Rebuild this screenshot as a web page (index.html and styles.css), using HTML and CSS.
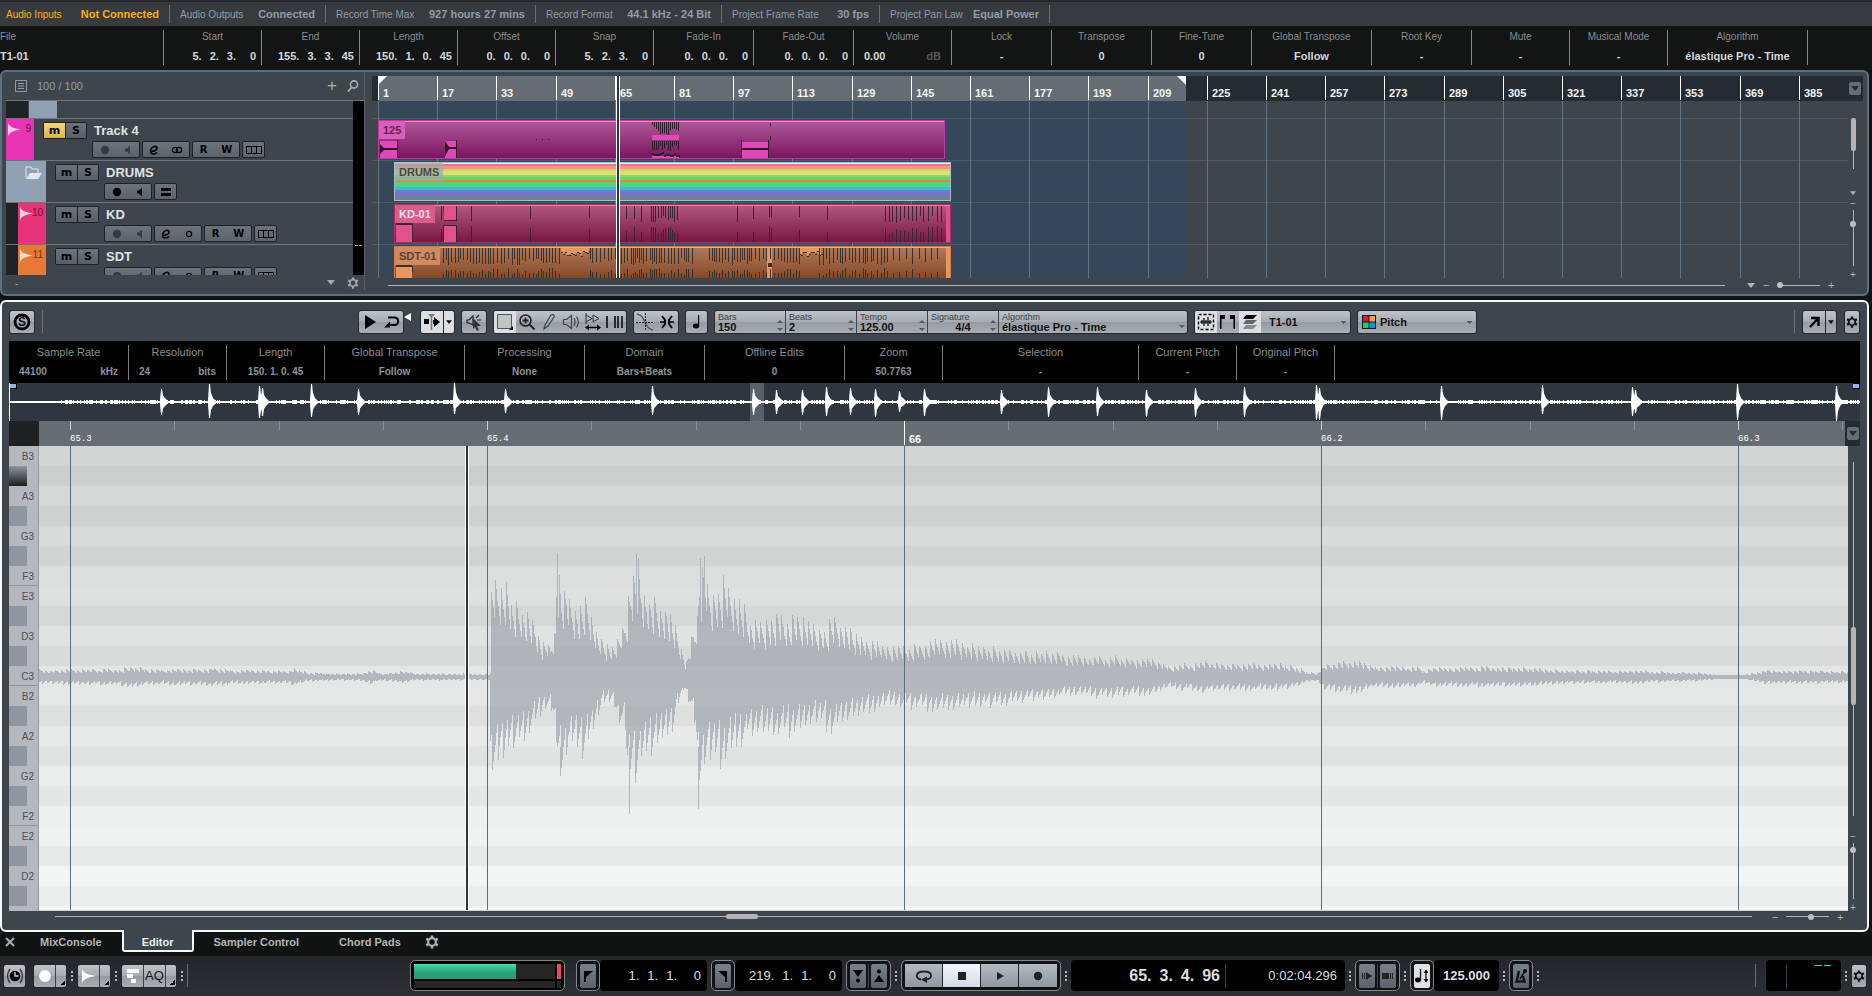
FILE: index.html
```html
<!DOCTYPE html>
<html lang="en">
<head>
    <meta charset="UTF-8">
    <meta name="viewport" content="width=device-width, initial-scale=1.0">
    <title>Project - Sample Editor</title>
    <link rel="stylesheet" href="styles.css">
</head>
<body>

    <!-- Icons -->
    <svg class="defs" aria-hidden="true">
        <symbol id="i-gear" viewBox="0 0 16 16"><path fill="none" stroke="currentColor" stroke-width="2.4" d="M8 3.6a4.4 4.4 0 1 0 .01 0z"/><path stroke="currentColor" stroke-width="3" d="M8 .5v3M8 12.500v3M1.500 4.250l2.600 1.500M11.900 10.250l2.600 1.500M1.500 11.750l2.600-1.500M11.900 5.750l2.600-1.500"/></symbol>
        <symbol id="i-down" viewBox="0 0 8 5"><path fill="currentColor" d="M0 0h8L4 5z"/></symbol>
        <symbol id="i-wave" viewBox="0 0 14 14"><path fill="currentColor" d="M0 0c2 4 6 6 14 7-8 1-12 3-14 7z"/></symbol>
        <symbol id="i-rec" viewBox="0 0 10 10"><circle cx="5" cy="5" r="4.200" fill="currentColor"/></symbol>
        <symbol id="i-mon" viewBox="0 0 10 10"><path fill="currentColor" d="M2 3.500h2L7 .5v9L4 6.500H2z"/></symbol>
        <symbol id="i-edit" viewBox="0 0 10 10"><path fill="none" stroke="currentColor" stroke-width="1.600" d="M2 6.200C5 6.600 8.500 5 8 2.800 7.500.6 3.200 1 1.800 4.500.8 8 3 9.200 5 9c1.600-.2 2.500-.8 3-1.600"/></symbol>
        <symbol id="i-mono" viewBox="0 0 12 10"><circle cx="6" cy="5" r="2.600" fill="none" stroke="currentColor" stroke-width="1.300"/></symbol>
        <symbol id="i-stereo" viewBox="0 0 12 10"><g fill="none" stroke="currentColor" stroke-width="1.300"><circle cx="4" cy="5" r="2.600"/><circle cx="8" cy="5" r="2.600"/></g></symbol>
        <symbol id="i-lanes" viewBox="0 0 16 8"><path fill="none" stroke="currentColor" d="M.5.500h15v7H.500zM5.500.500v7M10.500.500v7"/></symbol>
        <symbol id="i-group" viewBox="0 0 10 8"><path fill="currentColor" d="M0 0h10v3H0zM0 5h10v3H0z"/></symbol>
    </svg>

    <!-- Status Line -->
    <header class="status-line">
        <div class="stat warn" style="width:170px"><span>Audio Inputs</span><b>Not Connected</b></div>
        <div class="stat" style="width:156px"><span>Audio Outputs</span><b>Connected</b></div>
        <div class="stat" style="width:210px"><span>Record Time Max</span><b>927 hours 27 mins</b></div>
        <div class="stat" style="width:186px"><span>Record Format</span><b>44.1 kHz - 24 Bit</b></div>
        <div class="stat" style="width:158px"><span>Project Frame Rate</span><b>30 fps</b></div>
        <div class="stat" style="width:170px"><span>Project Pan Law</span><b>Equal Power</b></div>
    </header>

    <!-- Info Line -->
    <section class="info-line">
        <div class="info file"><span>File</span><b>T1-01</b></div>
        <div class="info"><span>Start</span><b class="time"><i>5.</i><i>2.</i><i>3.</i><i>0</i></b></div>
        <div class="info"><span>End</span><b class="time"><i>155.</i><i>3.</i><i>3.</i><i>45</i></b></div>
        <div class="info"><span>Length</span><b class="time"><i>150.</i><i>1.</i><i>0.</i><i>45</i></b></div>
        <div class="info"><span>Offset</span><b class="time"><i>0.</i><i>0.</i><i>0.</i><i>0</i></b></div>
        <div class="info"><span>Snap</span><b class="time"><i>5.</i><i>2.</i><i>3.</i><i>0</i></b></div>
        <div class="info w100"><span>Fade-In</span><b class="time"><i>0.</i><i>0.</i><i>0.</i><i>0</i></b></div>
        <div class="info w100"><span>Fade-Out</span><b class="time"><i>0.</i><i>0.</i><i>0.</i><i>0</i></b></div>
        <div class="info"><span>Volume</span><b class="split">0.00 <em>dB</em></b></div>
        <div class="info w100"><span>Lock</span><b>-</b></div>
        <div class="info w100"><span>Transpose</span><b>0</b></div>
        <div class="info w100"><span>Fine-Tune</span><b>0</b></div>
        <div class="info w120"><span>Global Transpose</span><b>Follow</b></div>
        <div class="info w100"><span>Root Key</span><b>-</b></div>
        <div class="info"><span>Mute</span><b>-</b></div>
        <div class="info"><span>Musical Mode</span><b>-</b></div>
        <div class="info w140"><span>Algorithm</span><b>élastique Pro - Time</b></div>
    </section>

    <!-- Project Zone -->
    <main class="project panel">
        <div class="track-list">
            <div class="list-head">
                <svg class="ic12" viewBox="0 0 12 12"><path fill="none" stroke="currentColor" d="M.500.500h11v11H.500zM3 3.500h6M3 6h6M3 8.500h6"/></svg>
                <span>100 / 100</span>
                <button class="plain push" aria-label="Add track">+</button>
                <button class="plain" aria-label="Find track"><svg class="ic12" viewBox="0 0 12 12"><circle cx="7" cy="4.500" r="3.600" fill="none" stroke="currentColor" stroke-width="1.600"/><path stroke="currentColor" stroke-width="1.800" d="M4.500 7.500L1 11.500"/></svg></button>
            </div>
            <div class="tracks">
                <div class="rows" id="tracks">
                    <div class="row cut"><div class="indent wide"></div><div class="swatch folder"></div></div>
                </div>
                <div class="meter"><i class="peak"></i></div>
            </div>
            <div class="list-foot"><span>-</span><svg class="ic8 push" viewBox="0 0 8 5"><use href="#i-down"/></svg><svg class="ic12"><use href="#i-gear"/></svg></div>
        </div>
        <div class="timeline">
            <div class="ruler" id="ruler">
                <div class="ruler-range"></div>
                <button class="mini" aria-label="Ruler format"><svg class="ic8"><use href="#i-down"/></svg></button>
            </div>
            <div class="arrange">
                <div class="lanes" id="lanes">
                    <div class="lane cut"></div>
                    <div class="lane"><div class="clip magenta" id="clip-t4"><span>125</span></div></div>
                    <div class="lane"><div class="clip drums"><span>DRUMS</span></div></div>
                    <div class="lane"><div class="clip pink" id="clip-kd"><span>KD-01</span></div></div>
                    <div class="lane"><div class="clip orange" id="clip-sdt"><span>SDT-01</span></div></div>
                </div>
                <div class="vbar">
                    <div class="vscroll"><i></i></div>
                    <svg class="ic8 small"><use href="#i-down"/></svg>
                    <span>−</span>
                    <input type="range" class="vzoom" aria-label="Vertical zoom" value="78">
                    <span>+</span>
                </div>
            </div>
            <div class="hbar">
                <div class="hscroll"></div>
                <svg class="ic8"><use href="#i-down"/></svg>
                <span>−</span><input type="range" class="hzoom" aria-label="Horizontal zoom" value="0"><span>+</span>
            </div>
            <div class="playhead arrange-head"></div>
        </div>
    </main>

    <!-- Editor Zone -->
    <section class="editor panel">
        <div class="toolbar">
            <button class="btn w26" aria-label="Solo editor"><svg class="ic18" viewBox="0 0 18 18"><circle cx="9" cy="9" r="7" fill="none" stroke="#000" stroke-width="2.800"/><text x="9" y="13" text-anchor="middle" class="solo">S</text></svg></button>
            <i class="sep"></i>
            <div class="tools-mid">
                <div class="group">
                    <button class="btn w22" aria-label="Audition"><svg class="ic14" viewBox="0 0 14 14"><path d="M2 0l11 7L2 14z"/></svg></button>
                    <button class="btn w22" aria-label="Audition loop"><svg class="ic16" viewBox="0 0 16 16"><path fill="none" stroke="#000" stroke-width="2" d="M4 3.500h7a3.800 3.800 0 0 1 0 7.500H4"/><path d="M0 13.500l6-6v6z"/></svg></button>
                </div>
                <svg class="ic8 notch" viewBox="0 0 8 8"><path fill="#fff" d="M7 0v8L0 4z"/></svg>
                <div class="group on">
                    <button class="btn w22" aria-label="Auto scroll"><svg class="ic18" viewBox="0 0 18 18"><path d="M1 6h5v5H1zM11 7V4l6 5-6 5v-3h-1V7z"/><path stroke="#777" stroke-width="1.500" d="M8.500 2v15"/><path fill="#777" d="M5 1h7L8.500 5z"/></svg></button>
                    <button class="btn w11" aria-label="Auto scroll options"><svg class="ic8 small"><use href="#i-down"/></svg></button>
                </div>
                <button class="btn w26" aria-label="Acoustic feedback"><svg class="ic18" viewBox="0 0 18 18"><path fill="none" stroke="#222" stroke-width="1.200" d="M2 7h2l4-4v9L4 10H2zM11 5l3-3M12 7h4"/><path d="M8 5l8 8h-4l2 4-2 1-2-4-2 2z" fill="#333"/></svg></button>
                <div class="group">
                    <button class="btn w22 lit" aria-label="Range selection"><svg class="ic18" viewBox="0 0 18 18"><path fill="#bfc5c3" stroke="#555" d="M1.500 1.500h14v14h-14z"/><path d="M17 13v4h-4z"/></svg></button>
                    <button class="btn w22" aria-label="Zoom"><svg class="ic18" viewBox="0 0 18 18"><circle cx="7.500" cy="7.500" r="5.500" fill="none" stroke="#222" stroke-width="1.600"/><path stroke="#222" stroke-width="1.800" d="M4.500 7.500h6M7.500 4.500v6M11.500 11.500l5 5"/></svg></button>
                    <button class="btn w22" aria-label="Draw"><svg class="ic18" viewBox="0 0 18 18"><path fill="none" stroke="#444" stroke-width="1.200" d="M4 16l1-4 6-10c1-1 4 0 3 2L8 13z"/></svg></button>
                    <button class="btn w22" aria-label="Play"><svg class="ic18" viewBox="0 0 18 18"><path fill="none" stroke="#444" stroke-width="1.200" d="M1.500 6.500h3l5-4v13l-5-4h-3zM12 5q2 4 0 8M14.500 3.500q3.500 5.500 0 11"/></svg></button>
                    <button class="btn w22" aria-label="Scrub"><svg class="ic18" viewBox="0 0 18 18"><path fill="none" stroke="#333" d="M2 0v11M2 2l6 3.500L2 9M9 2v7M9 2l6 3.500L9 9"/><path stroke="#000" stroke-width="1.600" d="M3 14.500h12"/><path d="M1 14.500l4-3v6zM17 14.500l-4-3v6z"/></svg></button>
                    <button class="btn w22" aria-label="Warp"><svg class="ic18" viewBox="0 0 18 18"><path stroke="#000" stroke-width="1.500" d="M1 3v12M9 3v12M12 3v12M16 3v12"/></svg></button>
                </div>
                <div class="group">
                    <button class="btn w22" aria-label="Snap to zero crossing"><svg class="ic18" viewBox="0 0 18 18"><path fill="none" stroke="#555" stroke-width="1.300" d="M1 1c5 1 6 4 8 8s3 7 8 8"/><path stroke="#111" stroke-dasharray="2 1" d="M9.500 0v18M0 9.500h18"/></svg></button>
                    <button class="btn w22" aria-label="Snap"><svg class="ic18" viewBox="0 0 18 18"><path fill="none" stroke="#000" stroke-width="2" d="M4 3l3 4v4l-3 4M14 3l-3 4v4l3 4"/><path stroke="#000" stroke-width="1.500" d="M2 9h4M12 9h4"/></svg></button>
                </div>
                <button class="btn w24" aria-label="Musical mode"><svg class="ic16" viewBox="0 0 16 16"><ellipse cx="7" cy="12" rx="3.200" ry="2.500"/><path stroke="#000" stroke-width="1.200" d="M9.600 1v11"/></svg></button>
                <div class="group fields">
                    <label class="field"><span>Bars</span><input value="150"></label>
                    <label class="field"><span>Beats</span><input value="2"></label>
                    <label class="field"><span>Tempo</span><input value="125.00"></label>
                    <label class="field sig"><span>Signature</span><input value="4/4"></label>
                    <label class="field algo"><span>Algorithm</span><select><option>élastique Pro - Time</option></select></label>
                </div>
                <div class="group">
                    <button class="btn w22 lit" aria-label="Show audio event"><svg class="ic18" viewBox="0 0 18 18"><path fill="none" stroke="#000" stroke-width="1.400" stroke-dasharray="3 2" d="M1.500 1.500h15v15h-15z"/><path stroke="#000" stroke-width="1.200" d="M3 9h12M5 7v4M7 5v8M9 7v4M11 4v9M13 7v4"/></svg></button>
                    <button class="btn w22" aria-label="Show regions"><svg class="ic18" viewBox="0 0 18 18"><path d="M1 2h5v4H2.500v10H1zM11 2h5v14h-1.500V6H11z"/></svg></button>
                    <button class="btn w22 lit" aria-label="Layers"><svg class="ic16" viewBox="0 0 16 16"><path d="M4 1h11l-4 4H1z"/><path fill="#666" d="M4 6h11l-4 4H1z"/><path fill="#888" d="M4 11h11l-4 4H1z"/></svg></button>
                    <select class="pick w89" aria-label="Event"><option>T1-01</option></select>
                </div>
                <div class="group pitch">
                    <svg class="ic14" viewBox="0 0 14 14"><path fill="#0b1a2b" d="M0 0h14v14H0z"/><path fill="#e8112d" d="M1 1h5.500v5.500H1z"/><path fill="#f0a52f" d="M7.500 1H13v5.500H7.500z"/><path fill="#12d36b" d="M1 7.500h5.500V13H1z"/><path fill="#0b93e0" d="M7.500 7.500H13V13H7.500z"/></svg>
                    <select class="pick" aria-label="Color mode"><option>Pitch</option></select>
                </div>
            </div>
            <i class="sep"></i>
            <div class="group">
                <button class="btn w22" aria-label="Open window"><svg class="ic14" viewBox="0 0 14 14"><path fill="none" stroke="#000" stroke-width="2.400" d="M4 3h7.500v8M11 3.500L3 12"/></svg></button>
                <button class="btn w11" aria-label="Window options"><svg class="ic8 small"><use href="#i-down"/></svg></button>
            </div>
            <button class="btn w16" aria-label="Set up toolbar"><svg class="ic12"><use href="#i-gear"/></svg></button>
        </div>

        <div class="sample-info">
            <div class="info w120"><span>Sample Rate</span><b class="split">44100 <em>kHz</em></b></div>
            <div class="info"><span>Resolution</span><b class="split">24 <em>bits</em></b></div>
            <div class="info"><span>Length</span><b>150. 1. 0. 45</b></div>
            <div class="info w140"><span>Global Transpose</span><b>Follow</b></div>
            <div class="info w120"><span>Processing</span><b>None</b></div>
            <div class="info w120"><span>Domain</span><b>Bars+Beats</b></div>
            <div class="info w140"><span>Offline Edits</span><b>0</b></div>
            <div class="info"><span>Zoom</span><b>50.7763</b></div>
            <div class="info w196"><span>Selection</span><b>-</b></div>
            <div class="info"><span>Current Pitch</span><b>-</b></div>
            <div class="info"><span>Original Pitch</span><b>-</b></div>
        </div>

        <div class="overview" id="overview"><div class="view-range"></div></div>

        <div class="sample-ruler">
            <div class="corner"></div>
            <div class="beats" id="beats"></div>
            <div class="ruler-menu"><button class="mini" aria-label="Ruler format"><svg class="ic8"><use href="#i-down"/></svg></button></div>
        </div>

        <div class="sample-area">
            <div class="keys" id="keys"></div>
            <div class="wave" id="wave"><div class="playhead"></div></div>
            <div class="vbar tall">
                <div class="vscroll"><i></i></div>
                <span>−</span>
                <input type="range" class="vzoom" aria-label="Waveform zoom" value="92">
                <span>+</span>
            </div>
        </div>
        <div class="hbar wide">
            <div class="hscroll"><i></i></div>
            <span>−</span><input type="range" class="hzoom" aria-label="Sample zoom" value="60"><span>+</span>
        </div>
    </section>

    <!-- Lower Zone Tabs -->
    <nav class="tabs">
        <button class="plain close" aria-label="Close lower zone"><svg class="ic12" viewBox="0 0 12 12"><path stroke="currentColor" stroke-width="2" d="M2 2l8 8M10 2l-8 8"/></svg></button>
        <button class="tab">MixConsole</button>
        <button class="tab active">Editor</button>
        <button class="tab">Sampler Control</button>
        <button class="tab">Chord Pads</button>
        <button class="plain" aria-label="Set up tabs"><svg class="ic14"><use href="#i-gear"/></svg></button>
    </nav>

    <!-- Transport -->
    <footer class="transport">
        <button class="btn w24" aria-label="Constrain delay"><svg class="ic18" viewBox="0 0 18 18"><circle cx="9" cy="9" r="5.300"/><path fill="none" stroke="#ddd" stroke-width="1.300" d="M9 5v4h3.500"/><path fill="none" stroke="#333" stroke-width="1.300" d="M4 2Q-1 9 4 16M14 2q5 7 0 14"/></svg></button>
        <div class="group gap-l"><button class="btn w22" aria-label="Record mode"><svg class="ic14 white"><use href="#i-rec"/></svg></button><button class="btn w10 corner-btn" aria-label="Record options"></button></div>
        <i class="dots"></i>
        <div class="group"><button class="btn w22" aria-label="Audio record mode"><svg class="ic14 white"><use href="#i-wave"/></svg></button><button class="btn w10 corner-btn" aria-label="Audio options"></button></div>
        <i class="dots"></i>
        <div class="group"><button class="btn w22" aria-label="MIDI record mode"><svg class="ic14 white" viewBox="0 0 14 14"><path fill="#fff" d="M1 0h12v4H1zM1 5h6v4H1zM5 10h5v4H5z"/></svg></button><button class="btn w22 aq">AQ</button><button class="btn w10 corner-btn" aria-label="Quantize options"></button></div>
        <i class="dots"></i>
        <i class="sep"></i>

        <div class="load"><div class="load-bar"><i></i></div><div class="load-clip"></div><div class="load-disk"></div><div class="load-disk"></div></div>

        <div class="ring"><button class="key" aria-label="Left locator"><svg class="ic14" viewBox="0 0 14 14"><path d="M3 13V2h9L5 8v5z"/></svg></button></div>
        <div class="display time loc"><i>1.</i><i>1.</i><i>1.</i><i>0</i></div>
        <div class="ring second"><button class="key" aria-label="Right locator"><svg class="ic14" viewBox="0 0 14 14"><path d="M11 13V2H2l7 6v5z"/></svg></button></div>
        <div class="display time loc"><i>219.</i><i>1.</i><i>1.</i><i>0</i></div>
        <div class="ring second">
            <button class="key" aria-label="Punch in"><svg class="ic14" viewBox="0 0 14 14"><path d="M2 1h10L7 8z"/><circle cx="7" cy="11.500" r="2"/></svg></button>
            <i class="bar"></i>
            <button class="key" aria-label="Punch out"><svg class="ic14" viewBox="0 0 14 14"><path d="M2 13h10L7 6z"/><circle cx="7" cy="2.500" r="2"/></svg></button>
        </div>
        <i class="dots"></i>
        <div class="ring play">
            <button aria-label="Cycle"><svg class="ic16" viewBox="0 0 16 16"><path fill="none" stroke="#222" stroke-width="1.800" d="M5 11.500C-1 10.500-1 3.500 8 3.500s9 7 2 8"/><path fill="#222" d="M5 11.500l6-3v6.500z"/></svg></button>
            <button class="lit" aria-label="Stop"><svg class="ic14" viewBox="0 0 14 14"><path fill="#222" d="M3 3h8v8H3z"/></svg></button>
            <button aria-label="Start"><svg class="ic14" viewBox="0 0 14 14"><path fill="#222" d="M4 3l7 4-7 4z"/></svg></button>
            <button aria-label="Record"><svg class="ic10"><use href="#i-rec"/></svg></button>
        </div>
        <i class="dots"></i>
        <div class="display position"><b class="time"><i>65.</i><i>3.</i><i>4.</i><i>96</i></b><i class="bar"></i><span>0:02:04.296</span></div>
        <i class="dots"></i>
        <div class="ring">
            <button class="key" aria-label="Pre-roll"><svg class="ic12" viewBox="0 0 12 12"><path stroke="#222" d="M1.500 3v6M3.500 3v6"/><path fill="#222" d="M5 2l6 4-6 4z"/></svg></button>
            <i class="bar"></i>
            <button class="key" aria-label="Post-roll"><svg class="ic12" viewBox="0 0 12 12"><path fill="#222" d="M0 3h7v6H0z"/><path stroke="#222" d="M8.500 3v6M10.500 3v6"/></svg></button>
        </div>
        <i class="dots"></i>
        <div class="ring"><button class="key lit" aria-label="Tempo track"><svg class="ic16" viewBox="0 0 16 16"><ellipse cx="4" cy="12" rx="3" ry="2.400"/><path stroke="#111" stroke-width="1.300" d="M6.500 1v11M12 3v10"/><path d="M9.500 5L12 1.500 14.500 5zM9.500 11l2.500 3.500 2.500-3.500z"/></svg></button></div>
        <div class="display tempo"><b>125.000</b></div>
        <i class="dots"></i>
        <div class="ring"><button class="key" aria-label="Metronome"><svg class="ic16" viewBox="0 0 16 16"><path fill="none" stroke="#111" stroke-width="2.400" d="M6 3L3.500 13.500h8L10 8"/><path stroke="#111" stroke-width="1.500" d="M7 11l5-8"/><circle cx="12" cy="3" r="2"/></svg></button></div>
        <i class="dots"></i>
        <i class="sep push"></i>
        <div class="display levels"><i class="bar"></i><i class="level"></i><i class="level"></i></div>
        <i class="dots"></i>
        <button class="btn w16" aria-label="Set up transport"><svg class="ic12"><use href="#i-gear"/></svg></button>
    </footer>

    <script src="script.js"></script>
</body>
</html>
```

FILE: styles.css
```css
* {
    box-sizing: border-box;
}

body {
    margin: 0;
    min-height: 100vh;
    display: flex;
    flex-direction: column;
    background: #111313;
    font-family: "Liberation Sans", Arial, sans-serif;
    font-size: 11px;
    color: #c3c8cc;
    overflow: hidden;
}

button, input, select {
    font: inherit;
    color: inherit;
    margin: 0;
    padding: 0;
    border: 0;
    background: none;
}

i, em {
    font-style: normal;
}

svg {
    display: block;
    flex: none;
}

.defs { position: absolute; width: 0; height: 0; }
.ic8 { width: 8px; height: 5px; }
.ic8.small { width: 6px; height: 4px; }
.ic10 { width: 10px; height: 10px; }
.ic12 { width: 12px; height: 12px; }
.ic14 { width: 14px; height: 14px; }
.ic16 { width: 16px; height: 16px; }
.ic18 { width: 18px; height: 18px; }
.push { margin-left: auto; }
.w10 { width: 10px; }
.w11 { width: 11px; }
.w16 { width: 16px; }
.w22 { width: 22px; }
.w24 { width: 23px; }
.w26 { width: 26px; }

/* Status Line */
.status-line {
    display: flex;
    align-items: center;
    height: 26px;
    border-top: 2px solid #24282b;
    background: #383b3e;
    color: #8d9cab;
}

.stat {
    display: flex;
    justify-content: space-between;
    align-items: center;
    height: 18px;
    padding: 0 10px;
    border-right: 1px solid #63717e;
    white-space: nowrap;
}

.stat span {
    font-size: 10px;
}

.warn {
    padding-left: 6px;
    color: #ffab0f;
}

/* Info Line */
.info-line {
    display: flex;
    height: 44px;
    padding: 4px 0 5px;
    background: #131414;
}

.info {
    width: 98px;
    flex: none;
    display: flex;
    flex-direction: column;
    align-items: center;
    border-right: 1px solid #84888b;
    white-space: nowrap;
}

.info.file { width: 164px; align-items: flex-start; }
.info.w100 { width: 100px; }
.info.w120 { width: 120px; }
.info.w140 { width: 140px; }
.info.w196 { width: 196px; }

.info span {
    height: 20px;
    line-height: 13px;
    font-size: 10px;
    color: #8b8e90;
}

.info b {
    line-height: 13px;
    color: #d3d7da;
}

.time {
    display: flex;
    gap: 8px;
}

.time i:last-child {
    min-width: 12px;
    text-align: right;
}

.info .time {
    align-self: flex-end;
    padding-right: 5px;
}

.info .split {
    align-self: stretch;
    display: flex;
    justify-content: space-between;
    padding: 0 10px;
}

.info-line em {
    color: #56595b;
}

/* Panels */
.panel {
    margin-right: 3px;
    border: 2px solid #5f6f7d;
    border-radius: 6px;
    background: #3e454c;
}

.project {
    display: flex;
    height: 226px;
    margin-bottom: 4px;
}

/* Track List */
.track-list {
    width: 363px;
    flex: none;
    display: flex;
    flex-direction: column;
    padding-left: 4px;
    margin-bottom: 4px;
    border-right: 1px solid #596067;
}

.list-head {
    display: flex;
    align-items: center;
    gap: 10px;
    height: 29px;
    padding: 0 5px 0 9px;
    border-bottom: 1px solid #6d747b;
    color: #949ba0;
}

.plain {
    display: flex;
    align-items: center;
    color: #a9aeb2;
}

.list-head .plain { font-size: 17px; }

.tracks {
    display: flex;
    height: 174px;
    overflow: hidden;
}

.rows {
    flex: 1;
}

.meter {
    width: 11px;
    height: 174px;
    padding-top: 144px;
    background: #000;
}

.peak {
    display: block;
    height: 1px;
    margin: 0 2px;
    background: linear-gradient(#000, #000) center / 1px 1px no-repeat #e5a22a;
}

.row {
    display: flex;
    height: 42px;
    border-bottom: 1px solid #6d747b;
}

.row.cut { height: 18px; }

.indent { width: 12px; background: #1f2325; }
.indent.wide { width: 22px; margin-right: 1px; }

.swatch {
    width: 28px;
    flex: none;
    display: flex;
    justify-content: space-between;
    padding: 4px 3px 0 2px;
    font-size: 10px;
    color: #4a3540;
}

.swatch.folder { background: #90a1b4; }
.swatch.drumfolder { width: 40px; padding: 4px 1px 0 18px; background: #90a1b4; }
.swatch.magenta { background: #e733b4; color: #4c1d42; }
.swatch.pink { background: #e6337a; color: #6b1838; }
.swatch.orange { background: #e67934; color: #6d3617; }
.swatch svg { opacity: .75; color: #fff; margin-right: -2px; }

.track {
    padding: 3px 0 0 9px;
}

.track-top, .track-keys {
    display: flex;
    align-items: center;
}

.ms {
    display: flex;
    height: 17px;
    border: 1px solid #1d2124;
    border-radius: 2px;
}

.ms button {
    width: 21px;
    background: linear-gradient(#6c737b, #585f67);
    color: #000;
    font: bold 11px "DejaVu Sans", sans-serif;
    line-height: 15px;
}

.ms button + button { border-left: 1px solid #1d2124; }
.ms .on { background: linear-gradient(#f4d978, #d7b54c); }

.track-top strong {
    margin-left: 7px;
    font-size: 13px;
    color: #dfe2e4;
}

.track-keys {
    gap: 2px;
    margin: 2px 0 0 49px;
}

.pair {
    display: flex;
    justify-content: space-around;
    align-items: center;
    width: 48px;
    height: 17px;
    border: 1px solid #1d2124;
    border-radius: 2px;
    background: linear-gradient(#6c737b, #5c636b);
    color: #000;
}

.pair.one { width: 23px; }
.pair.dim { color: #343a40; }

.pair button {
    display: flex;
    font: bold 10px "DejaVu Sans", sans-serif;
    line-height: 15px;
}

.list-foot {
    display: flex;
    align-items: center;
    gap: 12px;
    padding: 0 5px 0 9px;
    height: 15px;
    color: #a2a7ab;
}

/* Arrangement */
.timeline {
    flex: 1;
    min-width: 0;
    display: flex;
    flex-direction: column;
    padding: 4px 4px 0 7px;
    position: relative;
}

.ruler {
    position: relative;
    height: 25px;
    overflow: hidden;
    background: #252b33;
}

.ruler-range {
    width: 808px;
    height: 25px;
    margin-left: 6px;
    background: #666c74;
}

.ruler-range::before, .ruler-range::after {
    content: "";
    float: left;
    border-top: 9px solid #fff;
    border-right: 9px solid transparent;
}

.ruler-range::after {
    float: right;
    border-right: 0;
    border-left: 9px solid transparent;
}

.tick {
    position: absolute;
    top: 0;
    height: 24px;
    padding: 10px 0 0 4px;
    border-left: 1px solid #fff;
    font-weight: bold;
    line-height: 15px;
    color: #f2f4f5;
}

.mini {
    display: flex;
    justify-content: center;
    align-items: center;
    width: 12px;
    height: 13px;
    border-radius: 2px;
    background: #666c74;
    color: #252b33;
}

.ruler .mini {
    position: absolute;
    right: 2px;
    top: 6px;
}

.arrange {
    display: flex;
    height: 177px;
}

.lanes {
    position: relative;
    flex: 1;
    overflow: hidden;
    background: linear-gradient(#37475a, #37475a) 6px 0 / 808px 100% no-repeat;
}

.grid-line {
    position: absolute;
    top: 0;
    bottom: 0;
    width: 1px;
    background: #667583;
}

.lane {
    height: 42px;
    padding-top: 1px;
    border-bottom: 1px solid #4c5a69;
}

.lane.cut { height: 18px; }

.clip {
    position: relative;
    width: 557px;
    height: 39px;
    margin-left: 22px;
    border: 1px solid;
    overflow: hidden;
}

.clip svg {
    position: absolute;
    left: 0;
    top: 0;
}

.clip span {
    position: relative;
    z-index: 1;
    display: inline-block;
    height: 18px;
    padding: 0 4px;
    font-weight: bold;
    line-height: 18px;
    color: #4f4548;
}

.clip.magenta {
    width: 567px;
    margin-left: 6px;
    border-color: #c733a4;
    background: linear-gradient(#b0599a, #7b1560);
    box-shadow: inset 0 1px #ef8ad6;
}

.clip.magenta span { background: #d860b8; color: #6b2159; }

.clip.drums {
    border-color: #a9bccb;
    background: linear-gradient(#e5edf3 1px, #f16d9f 1px 3px, #ea9b70 3px 6px, #e5c96d 6px 8px, #dbe172 8px 12px, #8fd961 12px 14px, #6cd161 14px 17px, #dd8452 17px 19px, #51d677 19px 23px, #4ccda0 23px 24px, #43bcc4 24px 27px, #6e7adb 27px 29px, #776fda 29px 32px, #708292 32px);
}

.clip.drums span { background: rgba(160, 170, 165, .75); color: #444b46; }

.clip.pink {
    border-color: #b42a62;
    background: linear-gradient(#b05a7c, #7a1740);
    box-shadow: inset 0 1px #f083ab;
}

.clip.pink span { background: #d95d8a; color: #f7dfe8; }

.clip.orange {
    border-color: #d97b45;
    background: linear-gradient(#b07a5a, #7d401e);
    box-shadow: inset 0 1px #f2a87c;
}

.clip.orange span { background: #d08a60; color: #5c4334; }

.playhead {
    position: absolute;
    top: 0;
    bottom: 0;
    left: 426px;
    width: 4px;
    border: solid #fff;
    border-width: 0 1px;
    background: #30353a;
}

.arrange-head {
    top: 4px;
    bottom: 16px;
    left: 251px;
}

/* Scroll and Zoom */
.vbar {
    width: 15px;
    flex: none;
    display: flex;
    flex-direction: column;
    align-items: center;
    padding: 17px 5px 0 0;
    color: #b7b3b5;
    font-size: 10px;
    line-height: 10px;
}

.vscroll {
    width: 5px;
    height: 51px;
    flex: none;
    margin-bottom: 22px;
    background: linear-gradient(#b7b3b5, #b7b3b5) 2px 0 / 1px 100% no-repeat;
}

.vscroll i {
    display: block;
    height: 33px;
    border-radius: 2px;
    background: #b7b3b5;
}

.vbar span { height: 10px; margin: 4px 0 1px; }

input[type="range"] {
    appearance: none;
    -webkit-appearance: none;
    width: 43px;
    height: 7px;
    background: linear-gradient(#b7b3b5, #b7b3b5) 0 3px / 100% 1px no-repeat;
}

input[type="range"]::-webkit-slider-thumb {
    -webkit-appearance: none;
    width: 6px;
    height: 6px;
    border-radius: 50%;
    background: #c0bec0;
}

input.vzoom {
    writing-mode: vertical-lr;
    direction: rtl;
    width: 7px;
    height: 56px;
    flex: none;
    background: linear-gradient(#b7b3b5, #b7b3b5) 3px 0 / 1px 100% no-repeat;
}

.hbar {
    display: flex;
    align-items: center;
    gap: 8px;
    height: 14px;
    padding: 0 29px 0 16px;
    color: #b7b3b5;
}

.hbar svg { margin-left: 14px; }
.hbar span { width: 6px; line-height: 10px; }

.hscroll {
    flex: 1;
    height: 1px;
    background: #b7b3b5;
}

/* Editor */
.editor {
    flex: 1;
    display: flex;
    flex-direction: column;
    padding: 0 7px;
    border-color: #f4f8fb;
}

.toolbar {
    display: flex;
    align-items: center;
    gap: 7px;
    height: 39px;
}

.tools-mid {
    flex: 1;
    display: flex;
    align-items: center;
    gap: 6px;
    padding-left: 308px;
}

.sep {
    width: 1px;
    height: 23px;
    background: #687078;
}

.group, .toolbar > .btn, .tools-mid > .btn, .transport > .btn {
    height: 24px;
    display: flex;
    align-items: center;
    border: 1px solid #24292e;
    border-radius: 3px;
    background: linear-gradient(#bfc3c9, #a6abb2 50%, #979ca4 52%, #a9aeb5);
    color: #111;
    overflow: hidden;
    flex: none;
}

.btn {
    display: flex;
    justify-content: center;
    align-items: center;
    height: 22px;
    color: #111;
}

.group.on, .btn.lit { background: #dcdee1; }
.group .btn + .w11 { border-left: 1px solid #24292e; }
.solo { font: bold 12px "Liberation Sans", sans-serif; }

.notch {
    height: 8px;
    margin: -9px 2px 0 -6px;
}

.field {
    position: relative;
    width: 71px;
    height: 22px;
    padding: 1px 3px;
    border-right: 1px solid #3c4248;
    display: block;
}

.field span {
    display: block;
    height: 10px;
    font-size: 9px;
    line-height: 10px;
    color: #3d4247;
}

.field input, .field select {
    display: block;
    width: 100%;
    height: 11px;
    font-weight: bold;
    line-height: 11px;
    appearance: none;
}

.field::before, .field::after {
    content: "";
    position: absolute;
    right: 2px;
    top: 9px;
    border: 3px solid transparent;
    border-top: 0;
    border-bottom-color: #555b61;
}

.field::after {
    top: 17px;
    border-top: 3px solid #555b61;
    border-bottom: 0;
}

.field.sig input { text-align: center; }
.field.algo { width: 188px; border: 0; }
.field.algo::before { display: none; }
.field.algo::after { top: 14px; }

.pick {
    width: 100px;
    height: 22px;
    padding-left: 8px;
    appearance: none;
    font-weight: bold;
    background: linear-gradient(#555b61, #555b61) calc(100% - 4px) 10px / 5px 1px no-repeat, linear-gradient(#555b61, #555b61) calc(100% - 5px) 11px / 3px 1px no-repeat, linear-gradient(#555b61, #555b61) calc(100% - 6px) 12px / 1px 1px no-repeat;
}

.pick.w89 { width: 89px; }
.group.pitch { width: 120px; padding-left: 4px; }
.pitch .pick { padding-left: 4px; }

/* Sample Info */
.sample-info {
    display: flex;
    height: 42px;
    padding: 4px 0 3px;
    background: #000;
}

.sample-info .info { border-color: #7b7f82; }

.sample-info .info span {
    font-size: 11px;
    line-height: 14px;
}

.sample-info .info b {
    font-size: 10px;
    color: #8e9397;
}

.sample-info em { color: inherit; }

.overview {
    position: relative;
    height: 38px;
    background: #2f3640;
    border-left: 1px solid #fff;
    overflow: hidden;
}

.overview::before, .overview::after {
    content: "";
    position: absolute;
    z-index: 1;
    left: 0;
    top: 0;
    width: 6px;
    height: 4px;
    border: solid #000;
    border-width: 1px 1px 1px 0;
    background: #8fb4f0;
}

.overview::after { left: auto; right: 0; }

.view-range {
    position: absolute;
    left: 740px;
    top: 0;
    width: 14px;
    height: 38px;
    background: #596068;
}

.overview svg { position: absolute; }

.sample-ruler {
    display: flex;
    height: 25px;
}

.corner { width: 30px; background: #1f2122; }

.beats {
    position: relative;
    flex: 1;
    overflow: hidden;
    background: #666c74;
}

.beat {
    position: absolute;
    top: 0;
    height: 9px;
    border-left: 1px solid #8b9097;
    font: 9px/12px "Liberation Mono", monospace;
    color: #fff;
}

/* the tick is the left border, so the label hangs below it */
.beat span {
    position: absolute;
    left: -1px;
    top: 12px;
}

.beat.major { height: 24px; border-color: #fff; }
.beat.major span { left: 4px; font: bold 11px/12px "Liberation Sans", sans-serif; }
.beat.minor { border-color: #cfd2d5; }

.ruler-menu {
    display: flex;
    align-items: center;
    justify-content: center;
    width: 15px;
    background: #252b33;
}

.sample-area {
    display: flex;
    height: 465px;
}

.keys {
    width: 30px;
    overflow: hidden;
    border-right: 1px solid #949ca6;
    background: #b5b8bf;
}

.key-row {
    height: 20px;
    padding-right: 4px;
    text-align: right;
    font-size: 10px;
    line-height: 22px;
    color: #4b5157;
}

.key-row.black::before {
    content: "";
    display: block;
    width: 18px;
    height: 20px;
    background: #8f96a0;
}

.key-row.low::before { background: linear-gradient(#8f96a0, #1c1e20); }
.key-row.edge { border-bottom: 1px solid #8f96a0; }

.wave {
    position: relative;
    flex: 1;
    overflow: hidden;
    border-bottom: 1px solid #cfd2d3;
}

.wave-row { height: 20px; }

.wave svg {
    position: absolute;
    left: 0;
    top: 0;
}

.wave .grid-line { background: #5d6d7a; }

.tall { width: 12px; padding: 16px 2px 0 0; }
.tall .vscroll { height: 354px; margin-bottom: 12px; padding-top: 165px; }
.tall .vscroll i { height: 78px; }

.hbar.wide {
    gap: 8px;
    padding: 0 17px 0 46px;
    height: 11px;
}

.wide .hscroll { margin-right: 12px; }

.wide .hscroll i {
    display: block;
    width: 32px;
    height: 5px;
    margin: -2px 0 0 671px;
    border-radius: 2px;
    background: #b7b3b5;
}

/* Tabs */
.tabs {
    display: flex;
    height: 24px;
    align-items: flex-start;
    font-weight: bold;
}

.tabs .plain { height: 20px; padding: 0 4px; }

.tab {
    height: 20px;
    padding: 0 20px;
    line-height: 20px;
    color: #b1b5b8;
}

.tab.active {
    position: relative;
    height: 22px;
    margin-top: -2px;
    padding: 2px 18px 0;
    border: solid #f4f8fb;
    border-width: 0 2px 2px;
    border-radius: 0 0 3px 3px;
    background: #3e454c;
    color: #e8f1f8;
}

/* Transport */
.transport {
    display: flex;
    align-items: center;
    height: 40px;
    padding: 0 5px 1px 3px;
    background: linear-gradient(#24262a, #2d3035);
}

.transport .group .btn { border-right: 1px solid #3c4146; }
.transport .group .btn:last-child { border: 0; }
.transport .gap-l { margin-left: 7px; }
.white { color: #fff; }
.transport .aq { font-size: 13px; }

.corner-btn {
    background: linear-gradient(135deg, transparent 50%, #000 50%) 4px 15px / 5px 5px no-repeat;
}

.dots {
    width: 2px;
    height: 10px;
    margin: 0 4px;
    flex: none;
    background: repeating-linear-gradient(#b4b7ba 0 2px, transparent 2px 4px);
}

.load {
    display: grid;
    grid-template: 15px 7px / 141px 4px;
    gap: 2px;
    width: 155px;
    height: 31px;
    margin: 0 11px 0 222px;
    padding: 3px;
    border: 1px solid #83878b;
    border-radius: 5px;
    background: #000;
    flex: none;
}

.load-bar, .load-disk { background: #262626; }

.load-bar i {
    display: block;
    width: 102px;
    height: 15px;
    background: linear-gradient(#42ddaa, #26a279 60%, #2c9b72);
}

.load-clip { background: #f4455b; }

.ring {
    display: flex;
    align-items: center;
    gap: 2px;
    height: 31px;
    padding: 0 3px;
    border: 1px solid #85898d;
    border-radius: 5px;
    background: #101214;
    flex: none;
}

.ring.second { margin-left: 4px; }

.key {
    display: flex;
    align-items: center;
    justify-content: center;
    width: 16px;
    height: 24px;
    border-radius: 2px;
    background: linear-gradient(#79818a, #5b626a);
}

.key.lit { background: #dfe2e4; }

.bar {
    width: 1px;
    height: 24px;
    background: #3b444c;
}

.display {
    display: flex;
    align-items: center;
    justify-content: flex-end;
    height: 31px;
    padding: 0 6px;
    border-radius: 4px;
    background: #000;
    color: #dcdfe2;
    font-size: 13px;
    flex: none;
}

.loc { width: 107px; }
.loc i:last-child { min-width: 16px; }
.ring.play { gap: 0; }

.play button {
    display: flex;
    align-items: center;
    justify-content: center;
    width: 38px;
    height: 23px;
    border-right: 1px solid #23272b;
    background: linear-gradient(#b3bac2, #8f979f);
    color: #222;
}

.play button.lit { background: linear-gradient(#f0f6fb, #d5dbe2); }
.play button:last-child { border: 0; }
.position { width: 274px; gap: 5px; padding-right: 8px; }
.position b { font-size: 16px; }
.position span { width: 106px; text-align: right; }
.tempo { width: 65px; padding-right: 9px; }

.levels {
    width: 75px;
    gap: 2px;
    align-items: flex-start;
    padding: 5px 10px 0;
}

.levels .bar { margin-right: 26px; }

.level {
    width: 7px;
    height: 1px;
    background: #3fe0a0;
}

.push.sep { margin-right: 10px; margin-left: auto; }
```

FILE: script.js
```js
const NS = "http://www.w3.org/2000/svg";

// small repeatable noise so the waveforms look the same on each load
let seed = 7;
function rnd() {
    seed = (seed * 16807) % 2147483647;
    return seed / 2147483647;
}

function addPath(parent, width, height, d, fill) {
    const svg = document.createElementNS(NS, "svg");
    svg.setAttribute("width", width);
    svg.setAttribute("height", height);
    const path = document.createElementNS(NS, "path");
    path.setAttribute("d", d);
    path.setAttribute("fill", fill);
    svg.appendChild(path);
    parent.appendChild(svg);
    return svg;
}

function addDiv(parent, className, left, text) {
    const div = document.createElement("div");
    div.className = className;
    div.style.left = left + "px";
    if (text) div.innerHTML = text;
    parent.prepend(div);
    return div;
}

// Track list
const use = (id, w = 10, h = 10) => `<svg width="${w}" height="${h}"><use href="#i-${id}"/></svg>`;
const tracks = [
    { no: "9", name: "Track 4", color: "magenta", muted: true, width: "stereo" },
    { name: "DRUMS", color: "drumfolder" },
    { no: "10", name: "KD", color: "pink", child: true, width: "mono" },
    { no: "11", name: "SDT", color: "orange", child: true, width: "mono" }
];

tracks.forEach(t => {
    const row = document.createElement("div");
    row.className = "row";
    const folder = `<svg width="18" height="16" viewBox="0 0 18 16"><path fill="none" stroke="#fff" d="M2 13V2h5l1 2h6v4"/><path fill="#fff" d="M6 8h12l-4 6H2z"/></svg>`;
    const rec = `<div class="pair ${t.no ? "dim" : ""}"><button aria-label="Record enable">${use("rec")}</button><button aria-label="Monitor">${use("mon")}</button></div>`;
    const keys = t.no
        ? `${rec}<div class="pair"><button aria-label="Edit">${use("edit")}</button><button aria-label="Channel">${use(t.width, 12)}</button></div>
           <div class="pair"><button>R</button><button>W</button></div>
           <div class="pair one"><button aria-label="Lanes">${use("lanes", 16, 8)}</button></div>`
        : `${rec}<div class="pair one"><button aria-label="Group">${use("group", 10, 8)}</button></div>`;
    row.innerHTML = `
        ${t.child ? '<div class="indent"></div>' : ""}
        <div class="swatch ${t.color}">${t.no ? use("wave", 13, 13) + t.no : folder}</div>
        <div class="track">
            <div class="track-top"><div class="ms"><button class="${t.muted ? "on" : ""}">m</button><button>S</button></div><strong>${t.name}</strong></div>
            <div class="track-keys">${keys}</div>
        </div>`;
    document.getElementById("tracks").appendChild(row);
});

// Arrangement ruler and grid, one line each 16 bars
const ruler = document.getElementById("ruler");
const lanes = document.getElementById("lanes");
const barStep = 59.2;
for (let i = 0; i * barStep + 40 < ruler.clientWidth; i++) {
    const x = Math.round(6 + i * barStep);
    const tick = addDiv(ruler, "tick", x, String(1 + i * 16));
    ruler.appendChild(tick);
    addDiv(lanes, "grid-line", x);
}

// Clip waveforms
function bars(xs, top, bottom, from) {
    return xs.map(x => {
        const a = Math.round(top * (0.6 + rnd() * 0.4));
        const b = Math.round(bottom * (0.6 + rnd() * 0.4));
        return `M${x} ${from}h1v${a}h-1zM${x} 38h1v-${b}h-1z`;
    }).join("");
}

const t4 = document.getElementById("clip-t4");
let burst = "";
for (let x = 273; x < 300; x += 2) {
    burst += `M${x} 1h1v${3 + Math.round(rnd() * 11)}h-1zM${x} 20h1v${3 + Math.round(rnd() * 8)}h-1zM${x} ${31 + Math.round(rnd() * 3)}h2v2h-2z`;
}
addPath(t4, 567, 38, "M1 20h17v17H1zM66 20h11v17H66zM362 21h27v16h-27zM273 14h27v5h-27zM273 35h27v2h-27z", "#dd49b6");
addPath(t4, 567, 38, burst + "M1 23l4 4h13v2H5l-4 4zM18 19h1v18h-1zM66 20l4 6h7v2h-7l-4 7zM77 19h1v18h-1zM362 19h1v18h-1zM362 27h27v2h-27zM389 19h1v18h-1zM391 2h1v3h-1zM391 15h1v4h-1zM157 18h1v1h-1zM163 18h1v1h-1zM169 18h1v1h-1z", "#2f1a2c");

const kd = document.getElementById("clip-kd");
const kdBars = [46, 76, 135, 194, 231, 239, 246, 342, 358, 374, 376, 404, 432];
for (let x = 256; x < 284; x += 2 + Math.round(rnd())) kdBars.push(x);
for (let x = 490; x < 548; x += 3 + Math.round(rnd() * 2)) kdBars.push(x);
addPath(kd, 557, 38, "M1 19h16v18H1zM49 1h12v15H49zM49 21h12v16H49zM551 1h5v36h-5z", "#e0508a");
addPath(kd, 557, 38, "M1 18h16v2H1zM17 18h1v19h-1zM48 1h1v15h13V1h-1v14H49zM48 37V20h14v17h-1V21H49v16z" + bars(kdBars, 17, 17, 1), "#38252f");

const sdt = document.getElementById("clip-sdt");
const sdtBars = [];
for (let x = 48; x < 545; x += 2 + Math.round(rnd() * 2 + (x > 490 ? 3 : 0))) {
    if ((x > 166 && x < 194) || (x > 298 && x < 314) || (x > 404 && x < 424)) continue;
    sdtBars.push(x);
}
let crest = "";
let crestLine = "";
[[166, 194], [404, 426]].forEach(([a, b]) => {
    crest += `M${a} 1`;
    for (let x = a; x <= b; x += 2) {
        const y = 4 + Math.round(rnd() * 5);
        crest += `L${x} ${y}`;
        crestLine += `M${x} ${y}h2v1h-2z`;
    }
    crest += `L${b} 1z`;
});
addPath(sdt, 557, 38, "M1 19h16v18H1zM372 1h5v36h-5zM551 1h5v36h-5z" + crest, "#e8965f");
addPath(sdt, 557, 38, crestLine + "M1 18h16v2H1zM17 19h1v6h-1zM373 16h4v4h-4z" + bars(sdtBars, 17, 17, 1), "#3c3028");

// Overview: [x, up, down]
const overview = document.getElementById("overview");
const hits = [[151, 13, 13], [199, 18, 16], [249, 16, 16], [252, 14, 14], [301, 18, 15], [348, 13, 13], [444, 19, 12], [495, 13, 11],
    [642, 16, 13], [743, 13, 13], [766, 12, 12], [792, 12, 13], [816, 15, 14], [840, 14, 13], [865, 13, 15], [889, 11, 10], [914, 13, 14],
    [991, 12, 12], [1038, 15, 15], [1087, 15, 14], [1136, 12, 15], [1185, 14, 15], [1234, 15, 15], [1306, 17, 18], [1309, 14, 18],
    [1431, 16, 18], [1532, 17, 12], [1622, 15, 14], [1625, 12, 11], [1727, 18, 18], [1826, 16, 19]];
const overW = overview.clientWidth;
let over = `M0 18h${overW}v2H0z`;
for (let x = 50; x < overW; x++) {
    if (rnd() > 0.6) over += `M${x} 17h1v4h-1z`;
}
hits.forEach(([x, up, down]) => {
    over += `M${x - 1} 17L${x} ${19 - up}h1L${x + 2} ${19 - up * 0.5}L${x + 4} 15L${x + 7} 18V20L${x + 4} 23L${x + 2} ${19 + down * 0.5}L${x + 1} ${19 + down}h-1L${x - 1} 21z`;
});
addPath(overview, overW, 38, over, "#fff");

// Sample ruler
const beats = document.getElementById("beats");
const wave = document.getElementById("wave");
const labels = ["65.3", "65.4", "66", "66.2", "66.3"];
for (let i = 0; i < 18; i++) {
    const x = Math.round(31 + i * 104.25);
    const beat = i % 4 === 0;
    const name = beat ? labels[i / 4] : "";
    addDiv(beats, "beat" + (name === "66" ? " major" : beat ? " minor" : ""), x, name && `<span>${name}</span>`);
}

// Waveform envelope, [x, peak] above and below the zero line
const tail = [[1060, 23], [1098, 21], [1118, 18], [1130, 13], [1146, 15], [1174, 17], [1210, 15], [1240, 15], [1258, 12], [1269, 5], [1279, 5], [1285, 15], [1315, 18],
    [1330, 13], [1380, 11], [1386, 7], [1396, 11], [1470, 12], [1520, 8], [1600, 7], [1660, 5], [1684, 2], [1705, 3], [1726, 8], [1810, 7], [3000, 6]];
const quiet = [[0, 8], [80, 9], [93, 12], [110, 9], [170, 9], [173, 12], [195, 8], [252, 8], [254, 11], [268, 5], [320, 4], [330, 8], [345, 4], [363, 7], [380, 4], [451, 4]];
const up = quiet.concat([[451, 102], [458, 106], [467, 108], [473, 82], [486, 78], [497, 62], [503, 38], [511, 38], [516, 60], [517, 126], [519, 126], [522, 94], [538, 88], [552, 78],
    [560, 52], [575, 36], [584, 60], [590, 96], [595, 126], [598, 126], [601, 104], [611, 98], [629, 86], [641, 36], [646, 15], [652, 45], [658, 75], [660, 122], [666, 122], [670, 110],
    [684, 110], [699, 94], [708, 70], [725, 72], [738, 74], [760, 68], [783, 60], [806, 64], [820, 50], [845, 38], [866, 34], [885, 43], [900, 42], [941, 36], [965, 30], [997, 29], [1036, 26]], tail);
const down = quiet.concat([[451, 105], [459, 100], [470, 82], [486, 76], [497, 54], [505, 36], [514, 42], [518, 75], [520, 100], [530, 88], [547, 82], [555, 68], [565, 34], [575, 30],
    [580, 55], [587, 60], [589, 114], [593, 108], [605, 102], [622, 86], [634, 60], [641, 25], [646, 15], [653, 38], [657, 60], [659, 114], [662, 112],
    [678, 102], [691, 94], [702, 76], [726, 70], [748, 68], [763, 56], [803, 56], [822, 46], [855, 32], [887, 40], [920, 34], [944, 34], [987, 28], [1036, 21]], tail);

function level(env, x) {
    let i = 1;
    while (env[i + 1] && env[i][0] < x) i++;
    const [x0, y0] = env[i - 1];
    const [x1, y1] = env[i];
    return y0 + (y1 - y0) * Math.min(1, (x - x0) / (x1 - x0));
}

// fast attack, slow fall, about one cycle each 5 px, each cycle a bit louder or softer
const gains = Array.from({ length: 1000 }, () => 0.8 + rnd() * 0.22);
function edge(env, x, shift) {
    const pos = (x + shift) / 5.3;
    const cycle = Math.floor(pos);
    const peak = level(env, x) * gains[cycle];
    return Math.max(2, Math.round(peak * (1 - (pos - cycle) * 0.5 - rnd() * 0.06)));
}

const mid = 231;
const waveW = wave.clientWidth;
let d = `M0 ${mid}`;
for (let x = 0; x < waveW; x++) d += `V${mid - edge(up, x, 0)}h1`;
d += `V${mid}`;
for (let x = waveW; x > 0; x--) d += `V${mid + edge(down, x, 2)}h-1`;
d += "z";
// single peaks that stand out of the body
[[518, -124], [597, -124], [661, -119], [665, -121], [590, 137], [659, 132], [521, 99]].forEach(([x, h]) => {
    const body = h < 0 ? mid - Math.min(70, -h) : mid + Math.min(70, h);
    d += h < 0 ? `M${x} ${body}V${mid + h}h1V${body}z` : `M${x} ${body}h1V${mid + h}h-1z`;
});
const body = addPath(wave, waveW, 465, d, "rgb(146, 153, 162)");
body.style.opacity = 0.58;

for (let i = 0; i < 5; i++) {
    const line = addDiv(wave, "grid-line", Math.round(31 + i * 417));
    wave.appendChild(line);
}
wave.appendChild(wave.querySelector(".playhead"));

// Keyboard and lane shading
const notes = ["B3", "", "A3", "", "G3", "", "F3", "E3", "", "D3", "", "C3", "B2", "", "A2", "", "G2", "", "F2", "E2", "", "D2", "", "C2"];
const keysBox = document.getElementById("keys");
const shades = document.createDocumentFragment();
notes.forEach((note, i) => {
    const key = document.createElement("div");
    key.className = "key-row" + (note ? "" : " black") + (i === 1 ? " low" : "") + (note[0] === "F" || note === "C3" ? " edge" : "");
    key.textContent = note === "C2" ? "" : note;
    keysBox.appendChild(key);

    const row = document.createElement("div");
    row.className = "wave-row";
    const base = note ? 211 + i * 1.5 : 202 + i * 1.5;
    row.style.background = `rgb(${Math.round(base)}, ${Math.round(base) + 1}, ${Math.round(base) + 1})`;
    shades.appendChild(row);
});
wave.prepend(shades);
```
